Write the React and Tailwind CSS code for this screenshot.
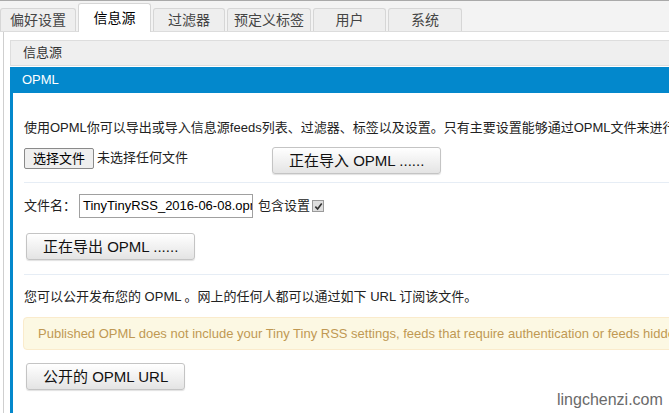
import React from 'react'

const font = { fontFamily: '"Liberation Sans", "Noto Sans CJK SC", sans-serif' }

const tabs = [
  { label: '偏好设置', w: 'w-[76px]' },
  { label: '信息源', w: 'w-[73px]', active: true },
  { label: '过滤器', w: 'w-[72px]' },
  { label: '预定义标签', w: 'w-[84px]' },
  { label: '用户', w: 'w-[73px]' },
  { label: '系统', w: 'w-[74px]' },
]

const Btn = ({ children, className = '' }) => (
  <button
    className={`h-[27px] px-[16px] rounded-[3px] border border-[#c4c4c4] bg-gradient-to-b from-white to-[#e4e4e4] shadow-[0_1px_1px_rgba(0,0,0,0.12)] text-[15px] text-[#111] leading-none whitespace-nowrap ${className}`}
  >
    {children}
  </button>
)

const App = () => {
  return (
    <div className="relative w-[669px] h-[413px] overflow-hidden bg-white text-[#222]" style={font}>
      {/* Tab bar */}
      <div className="h-[32px] border-t border-[#a9a9a9] bg-[#f3f3f3] border-b border-b-[#dcdcdc] flex items-end gap-[2px] w-[760px]">
        {tabs.map(t =>
          t.active ? (
            <div
              key={t.label}
              className={`${t.w} h-[29px] -mb-px bg-white border border-b-0 border-[#d6d6d6] rounded-t-[3px] flex items-center justify-center text-[14px] text-black`}
            >
              {t.label}
            </div>
          ) : (
            <div
              key={t.label}
              className={`${t.w} h-[23px] bg-[#eeeeee] border border-b-0 border-[#d6d6d6] rounded-t-[3px] flex items-center justify-center text-[14px] text-[#444]`}
            >
              {t.label}
            </div>
          )
        )}
      </div>

      {/* Pane */}
      <div className="ml-[3px] border-l border-[#cfcfcf] pl-[6px] pt-[8px] w-[760px] h-[400px]">
        <div className="h-[26px] bg-[#efefef] border border-[#dddddd] flex items-center pl-[12px] text-[13px] text-[#333]">
          信息源
        </div>
        <div className="mt-px h-[26px] bg-[#0388cc] flex items-center pl-[12px] text-[13px] text-white">
          OPML
        </div>

        <div className="border-l-[3px] border-[#0388cc] pl-[11px] pt-[26px] pb-[40px] text-[13px]">
          <div className="whitespace-nowrap leading-[18px]">
            使用OPML你可以导出或导入信息源feeds列表、过滤器、标签以及设置。只有主要设置能够通过OPML文件来进行导出。
          </div>

          <div className="mt-[10px] flex items-start">
            <button className="mt-px h-[21px] px-[8px] border border-[#8a8a8a] rounded-[2px] bg-[#efefef] text-[13px] leading-none text-black">
              选择文件
            </button>
            <span className="ml-[3px] mt-[4px] leading-none">未选择任何文件</span>
            <Btn className="ml-[84px]">正在导入 OPML ......</Btn>
          </div>

          <div className="mt-[8px] h-px bg-[#e6edf5] mr-[40px]" />

          <div className="mt-[11px] flex items-center">
            <span>文件名：</span>
            <div className="ml-[3px] w-[174px] h-[24px] border border-[#a0a0a0] pl-[3px] flex items-center overflow-hidden whitespace-nowrap text-[13px] text-black">
              TinyTinyRSS_2016-06-08.opml
            </div>
            <span className="ml-[5px]">包含设置</span>
            <span className="ml-[2px] w-[12px] h-[12px] border border-[#9a9a9a] bg-[#dedede] flex items-center justify-center">
              <svg width="9" height="9" viewBox="0 0 10 10">
                <path d="M1.5 5.2 L4 7.8 L8.6 1.6" stroke="#333" strokeWidth="1.8" fill="none" />
              </svg>
            </span>
          </div>

          <Btn className="mt-[15px] ml-[2px]">正在导出 OPML ......</Btn>

          <div className="mt-[14px] h-px bg-[#e6edf5] mr-[40px]" />

          <div className="mt-[13px] whitespace-nowrap leading-[18px]">
            您可以公开发布您的 OPML 。网上的任何人都可以通过如下 URL 订阅该文件。
          </div>

          <div className="mt-[11px] -ml-px h-[33px] rounded-[4px] bg-[#fcf8e3] border border-[#faebcc] flex items-center pl-[14px] whitespace-nowrap text-[13px] text-[#c09853]">
            Published OPML does not include your Tiny Tiny RSS settings, feeds that require authentication or feeds hidden from Popular feeds.
          </div>

          <Btn className="mt-[13px] ml-[2px]">公开的 OPML URL</Btn>
        </div>
      </div>

      {/* Watermark */}
      <div className="absolute left-[557px] top-[390px] text-[16px] text-[#6a6a6a] leading-[20px]">
        lingchenzi.com
      </div>
    </div>
  )
}

export default App
